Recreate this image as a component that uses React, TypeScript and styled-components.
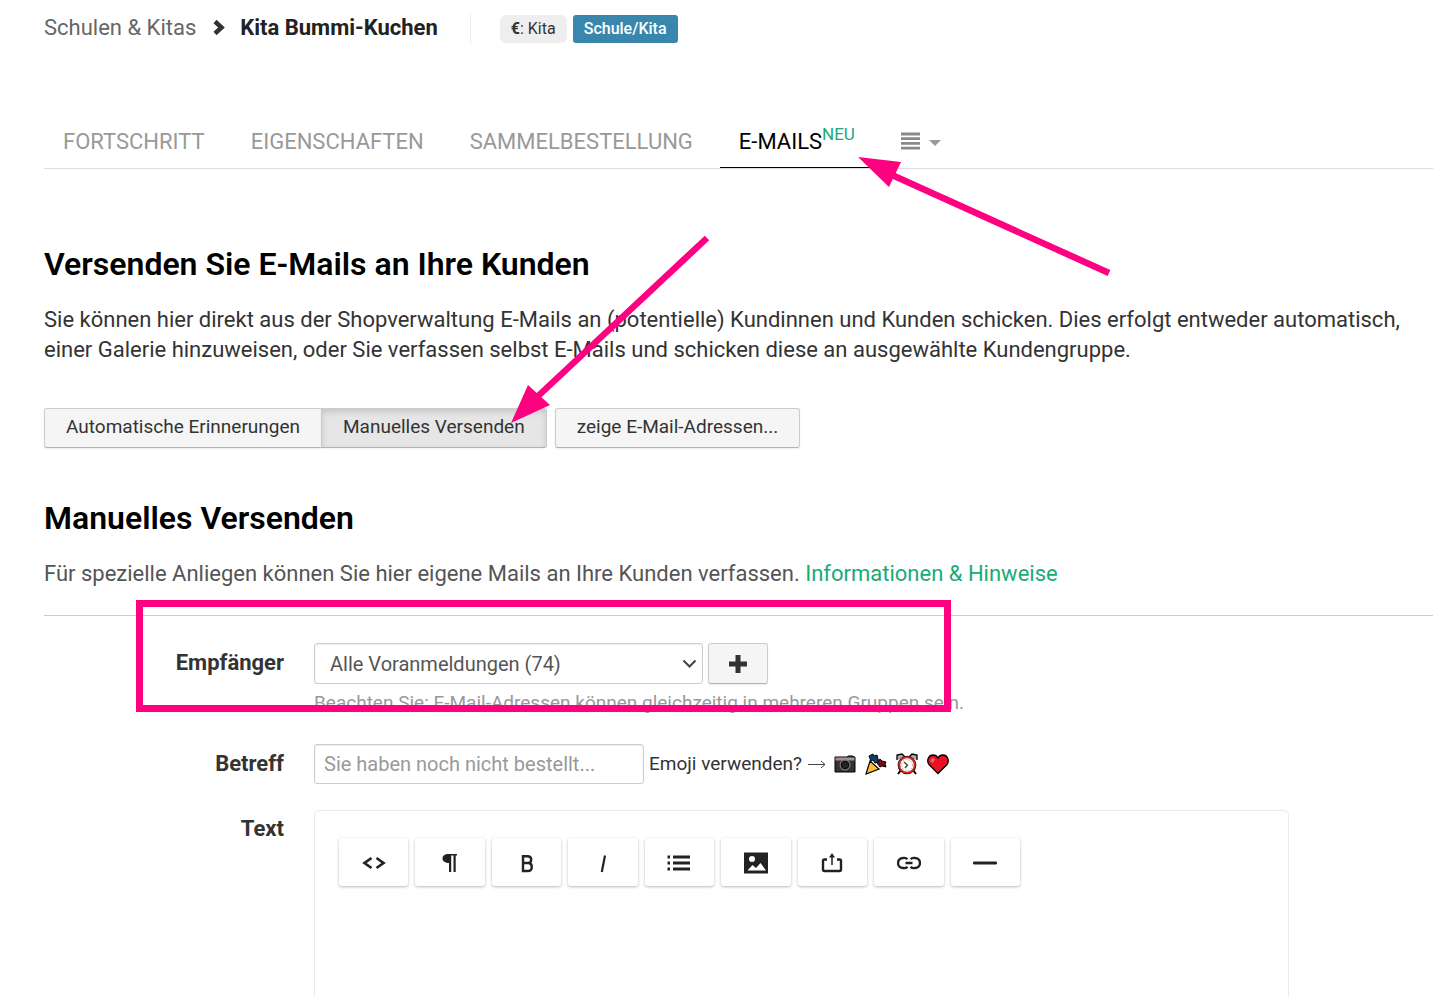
import React from "react";
import styled, { createGlobalStyle, css } from "styled-components";

const GlobalStyle = createGlobalStyle`
  *, *::before, *::after { box-sizing: border-box; }
  html { overflow-x: hidden; }
  body {
    margin: 0;
    background: #fff;
    color: #333;
    font-family: Roboto, "Noto Sans", sans-serif;
    font-size: 22px;
    line-height: 30px;
    overflow-x: hidden;
  }
  button, input, select { font: inherit; color: inherit; margin: 0; }
`;

const Page = styled.div`
  position: relative;
  display: flex;
  flex-direction: column;
  min-height: 100vh;
  padding-left: 44px;
  overflow: hidden;
`;

const Header = styled.header`
  display: flex;
  align-items: center;
  padding-top: 14px;
`;

const Breadcrumbs = styled.nav`
  display: flex;
  align-items: center;
  gap: 15px;
  padding: 0 32px 2px 0;
  margin-right: 29px;
  border-right: 1px solid #eee;
  line-height: 28px;
  a { color: #666; text-decoration: none; }
  strong { color: #222; font-weight: 700; }
`;

const Badge = styled.span<{ $blue?: boolean }>`
  height: 28px;
  padding: 0 11px;
  margin-right: 6px;
  border-radius: 6px;
  background: #eee;
  color: #333;
  font-size: 16px;
  line-height: 28px;
  ${(p) => p.$blue && css`
    border-radius: 3px;
    background: #3a87ad;
    color: #fff;
    font-weight: 500;
  `}
`;

const Tabs = styled.nav`
  display: flex;
  gap: 8px;
  margin-top: 70px;
  border-bottom: 1px solid #ddd;
`;

const tabStyle = css`
  display: flex;
  align-items: center;
  height: 54px;
  padding: 0 19px;
`;

const Tab = styled.a<{ $active?: boolean }>`
  ${tabStyle}
  padding-top: 2px;
  color: ${(p) => (p.$active ? "#000" : "#999")};
  border-bottom: 1px solid ${(p) => (p.$active ? "#000" : "transparent")};
  text-decoration: none;
  sup {
    align-self: flex-start;
    margin-top: 3px;
    color: #1aaa78;
    font-size: 17px;
  }
`;

const MenuTab = styled.button`
  ${tabStyle}
  gap: 9px;
  border: 0;
  background: none;
`;

const Title = styled.h1`
  margin: 75px 0 0;
  color: #000;
  font-size: 32px;
  line-height: 40px;
  font-weight: 600;
`;

const SubTitle = styled(Title).attrs({ as: "h2" })`
  margin-top: 50px;
`;

const Lead = styled.p`
  margin: 21px 0 0;
  white-space: nowrap;
`;

const Note = styled(Lead)`
  color: #555;
  a { color: #1aaa78; text-decoration: none; }
`;

const ButtonRow = styled.div`
  display: flex;
  gap: 8px;
  margin-top: 43px;
`;

const Group = styled.div`
  display: flex;
  button + button { margin-left: -1px; }
  button:first-child { border-radius: 3px 0 0 3px; }
  button:last-child { border-radius: 0 3px 3px 0; }
`;

const Button = styled.button<{ $pressed?: boolean }>`
  display: flex;
  align-items: center;
  justify-content: center;
  height: 40px;
  padding: 0 21px 2px;
  border: 1px solid #ccc;
  border-bottom-color: #b3b3b3;
  border-radius: 3px;
  background: #f5f5f5;
  box-shadow: 0 1px 2px rgba(0, 0, 0, 0.08);
  font-size: 19px;
  ${(p) => p.$pressed && css`
    background: #e6e6e6;
    box-shadow: inset 0 3px 6px rgba(0, 0, 0, 0.15), 0 1px 2px rgba(0, 0, 0, 0.05);
  `}
`;

const PlusButton = styled(Button)`
  width: 60px;
  height: 41px;
  padding: 0;
`;

const Form = styled.form`
  display: flex;
  flex: 1;
  flex-direction: column;
  margin-top: 26px;
  padding-top: 27px;
  border-top: 1px solid #ccc;
`;

const Field = styled.div<{ $grow?: boolean }>`
  display: grid;
  grid-template-columns: 240px 1fr;
  column-gap: 30px;
  flex: ${(p) => (p.$grow ? 1 : "none")};
`;

const Label = styled.label`
  padding-top: 5px;
  color: #333;
  font-weight: 700;
  text-align: right;
`;

const Controls = styled.div`
  display: flex;
  align-items: center;
  gap: 5px;
`;

const controlStyle = css`
  border: 1px solid #ccc;
  border-radius: 3px;
  background: #fff;
  box-shadow: inset 0 1px 2px rgba(0, 0, 0, 0.07);
  font-size: 20px;
`;

const SelectWrap = styled.div`
  display: grid;
  width: 389px;
  align-items: center;
  > * { grid-area: 1 / 1; }
  svg { justify-self: end; margin-right: 6px; pointer-events: none; }
`;

const Select = styled.select`
  ${controlStyle}
  width: 100%;
  height: 41px;
  padding: 0 30px 0 15px;
  color: #555;
  appearance: none;
`;

const Help = styled.p`
  margin: 4px 0 26px;
  color: #999;
  font-size: 19px;
`;

const TextInput = styled.input`
  ${controlStyle}
  width: 330px;
  height: 40px;
  padding: 0 9px;
  &::placeholder { color: #999; opacity: 1; }
`;

const EmojiHint = styled.div`
  display: flex;
  align-items: center;
  gap: 6px;
  font-size: 19px;
`;

const EmojiList = styled.div`
  display: flex;
  gap: 9px;
  margin-left: 2px;
`;

const EmojiButton = styled.button`
  display: flex;
  padding: 0;
  border: 0;
  background: none;
`;

const Editor = styled.div`
  min-height: 186px;
  margin-right: 144px;
  padding: 27px 24px;
  border: 1px solid #eaeaea;
  border-bottom: 0;
  border-radius: 5px 5px 0 0;
`;

const Toolbar = styled.div`
  display: grid;
  grid-template-columns: repeat(9, 1fr);
  column-gap: 7px;
  max-width: 681px;
`;

const Tool = styled.button`
  display: flex;
  align-items: center;
  justify-content: center;
  height: 48px;
  padding: 2px 0 0;
  border: 0;
  border-radius: 3px;
  background: #fff;
  box-shadow: 0 1px 3px rgba(0, 0, 0, 0.28);
  color: #222;
`;

const TextRow = styled(Field)`
  margin-top: 26px;
  ${Label} { padding-top: 4px; }
`;

const Annotations = styled.svg`
  position: absolute;
  top: 0;
  left: 0;
  pointer-events: none;
`;

const stroke = { fill: "none", stroke: "currentColor", strokeWidth: 2.4 };

const tools: { name: string; icon: React.ReactNode }[] = [
  { name: "HTML", icon: <path d="M9.500 7 2.500 12l7 5M14.500 7l7 5-7 5" {...stroke} strokeWidth={2.700} /> },
  { name: "Absatz", icon: <path d="M19 3v1.500h-1.300V21h-2.200V4.500h-2.300V21H11v-9C7.500 12 4.500 10.300 4.500 7.500S7 3 10 3z" /> },
  { name: "Fett", icon: <path d="M8 5.200h4.500c2.700 0 3.700 1.500 3.700 3.500 0 1.700-.8 3-2.700 3.300 2.300.200 3.300 1.700 3.300 3.900 0 2.600-1.500 4.100-4.300 4.100H8zM8 12h6" {...stroke} /> },
  { name: "Kursiv", icon: <path d="M14 4.500 10.800 21" {...stroke} strokeWidth={2.200} /> },
  { name: "Liste", icon: <path d="M6 6h17M6 12h17M6 18h17M0.500 6h2.500M0.500 12h2.500M0.500 18h2.500" {...stroke} strokeWidth={2.800} /> },
  { name: "Bild", icon: <path fillRule="evenodd" d="M0 1.500h24v21H0zM8 5a3 3 0 1 0 0 6 3 3 0 0 0 0-6zM3.500 19.500h18.500L16.500 12l-4.500 5-3.500-3z" /> },
  { name: "Datei", icon: <><path d="M7 8.500H4.500Q3 8.500 3 10v8.500Q3 20 4.500 20h15q1.500 0 1.500-1.500V10q0-1.500-1.500-1.500H17" {...stroke} /><path d="M12 14V5" {...stroke} strokeWidth={1.500} /><path d="m12 2 3 4.500H9z" /></> },
  { name: "Link", icon: <path d="M10.500 8.200A4.800 4.800 0 0 0 6 7a5 5 0 0 0 0 10 4.800 4.800 0 0 0 4.500-1.200M13.500 8.200A4.800 4.800 0 0 1 18 7a5 5 0 0 1 0 10 4.800 4.800 0 0 1-4.500-1.200M8.500 12h7" {...stroke} /> },
  { name: "Trennlinie", icon: <path d="M1.200 12h21.600" {...stroke} strokeWidth={2.800} strokeLinecap="round" /> },
];

const emojis: { name: string; icon: React.ReactNode }[] = [
  {
    name: "Kamera",
    icon: (
      <>
        <path d="M1 4h12l1-1h5l1 1h1v15H1z" fill="#333" stroke="#000" strokeWidth="1" />
        <path d="M1.500 4.500h19v3h-19z" fill="#999" />
        <path d="M3 5h2v1H3z" fill="#e65b3c" />
        <circle cx="11" cy="12" r="5.500" fill="#777" />
        <circle cx="11" cy="12" r="3.800" fill="#222" stroke="#000" strokeWidth="1" />
      </>
    ),
  },
  {
    name: "Party",
    icon: (
      <>
        <path d="m5 8 9 8-13 5z" fill="#ffbd3c" stroke="#000" strokeWidth="1.200" />
        <path d="m4 3 4-2 1 2 3-1 1 4 1 3-4 1-2-3-2 1z" fill="#07406b" stroke="#000" />
        <path d="m12 10 3-4 2 2 4 1-1 2 1 3-4-1-2 1z" fill="#7a0a1b" stroke="#000" />
      </>
    ),
  },
  {
    name: "Wecker",
    icon: (
      <>
        <path d="m1 7 0-5 5-1 3 3M21 7l0-5-5-1-3 3" fill="#aaa" stroke="#000" strokeWidth="1.300" />
        <path d="m5 17-3 4M17 17l3 4" stroke="#000" strokeWidth="2" />
        <circle cx="11" cy="12" r="9.300" fill="#000" />
        <circle cx="11" cy="12" r="7.700" fill="#fff" stroke="#d8291b" strokeWidth="2" />
        <circle cx="11" cy="12" r="5.500" fill="none" stroke="#888" strokeWidth="1" strokeDasharray="1 2" />
        <path d="m8 9 3.500 3L9 15" fill="none" stroke="#333" strokeWidth="1.200" />
      </>
    ),
  },
  {
    name: "Herz",
    icon: (
      <>
        <path d="M11 20.500 2 11.500C-1 7 2 2 6 2c2.500 0 4 1 5 3 1-2 2.500-3 5-3 4 0 7 5 4 9.500z" fill="#e81224" stroke="#000" strokeWidth="1.300" />
        <path d="m3 8 2-3 3 1-2 4z" fill="#f4606c" />
      </>
    ),
  },
];

const intro = [
  "Sie können hier direkt aus der Shopverwaltung E-Mails an (potentielle) Kundinnen und Kunden schicken. Dies erfolgt entweder automatisch,",
  "einer Galerie hinzuweisen, oder Sie verfassen selbst E-Mails und schicken diese an ausgewählte Kundengruppe.",
];

export default function App() {
  return (
    <>
      <GlobalStyle />
      <Page>
        <Header>
          <Breadcrumbs>
            <a href="#schulen">Schulen &amp; Kitas</a>
            <svg width="14" height="18" viewBox="0 0 14 18" aria-hidden="true">
              <path d="m4 2.500 6.500 6L4 14.500" fill="none" stroke="#333" strokeWidth="4.500" />
            </svg>
            <strong>Kita Bummi-Kuchen</strong>
          </Breadcrumbs>
          <Badge><b>€</b>: Kita</Badge>
          <Badge $blue>Schule/Kita</Badge>
        </Header>

        <Tabs>
          <Tab href="#fortschritt">FORTSCHRITT</Tab>
          <Tab href="#eigenschaften">EIGENSCHAFTEN</Tab>
          <Tab href="#sammelbestellung">SAMMELBESTELLUNG</Tab>
          <Tab href="#emails" $active>E-MAILS<sup>NEU</sup></Tab>
          <MenuTab type="button" aria-label="Weitere">
            <svg width="19" height="18" viewBox="0 0 19 18">
              <path d="M0 2h19M0 6.700h19M0 11.400h19M0 16.100h19" stroke="#888" strokeWidth="2.800" />
            </svg>
            <svg width="12" height="12" viewBox="0 0 12 12">
              <path d="M0 5h12L6 11z" fill="#999" />
            </svg>
          </MenuTab>
        </Tabs>

        <Title>Versenden Sie E-Mails an Ihre Kunden</Title>
        <Lead>{intro[0]}<br />{intro[1]}</Lead>

        <ButtonRow>
          <Group>
            <Button type="button">Automatische Erinnerungen</Button>
            <Button type="button" $pressed>Manuelles Versenden</Button>
          </Group>
          <Button type="button">zeige E-Mail-Adressen...</Button>
        </ButtonRow>

        <SubTitle>Manuelles Versenden</SubTitle>
        <Note>
          Für spezielle Anliegen können Sie hier eigene Mails an Ihre Kunden verfassen.{" "}
          <a href="#hinweise">Informationen &amp; Hinweise</a>
        </Note>

        <Form>
          <Field>
            <Label htmlFor="recipient">Empfänger</Label>
            <div>
              <Controls>
                <SelectWrap>
                  <Select id="recipient">
                    <option>Alle Voranmeldungen (74)</option>
                  </Select>
                  <svg width="15" height="10" viewBox="0 0 15 10" aria-hidden="true">
                    <path d="m1.500 1.500 6 6 6-6" fill="none" stroke="#444" strokeWidth="2" />
                  </svg>
                </SelectWrap>
                <PlusButton type="button" aria-label="Hinzufügen">
                  <svg width="18" height="18" viewBox="0 0 18 18">
                    <path d="M9 0v18M0 9h18" stroke="#333" strokeWidth="5" />
                  </svg>
                </PlusButton>
              </Controls>
              <Help>Beachten Sie: E-Mail-Adressen können gleichzeitig in mehreren Gruppen sein.</Help>
            </div>
          </Field>

          <Field>
            <Label htmlFor="subject">Betreff</Label>
            <Controls>
              <TextInput id="subject" type="text" placeholder="Sie haben noch nicht bestellt..." />
              <EmojiHint>
                <span>Emoji verwenden?</span>
                <svg width="18" height="10" viewBox="0 0 18 10" aria-hidden="true">
                  <path d="M0 5.500h17M13 2l4 3.500L13 9" fill="none" stroke="#444" />
                </svg>
                <EmojiList>
                  {emojis.map((e) => (
                    <EmojiButton key={e.name} type="button" aria-label={e.name}>
                      <svg width="22" height="22" viewBox="0 0 22 22">{e.icon}</svg>
                    </EmojiButton>
                  ))}
                </EmojiList>
              </EmojiHint>
            </Controls>
          </Field>

          <TextRow $grow>
            <Label as="span">Text</Label>
            <Editor>
              <Toolbar role="toolbar" aria-label="Text">
                {tools.map((t) => (
                  <Tool key={t.name} type="button" aria-label={t.name}>
                    <svg width="24" height="24" viewBox="0 0 24 24" fill="currentColor">{t.icon}</svg>
                  </Tool>
                ))}
              </Toolbar>
            </Editor>
          </TextRow>
        </Form>

        <Annotations width="1200" height="760" viewBox="0 0 1200 760" aria-hidden="true">
          <g fill="#ff0080" stroke="#ff0080">
            <path d="M1109 273 892 175M707 238 536 398" strokeWidth="6.500" />
            <path d="m858 157 43 5-12 25zM511 423l17-38 22 20z" stroke="none" />
            <path d="M139.500 603.500h808v105h-808z" fill="none" strokeWidth="7" />
          </g>
        </Annotations>
      </Page>
    </>
  );
}
